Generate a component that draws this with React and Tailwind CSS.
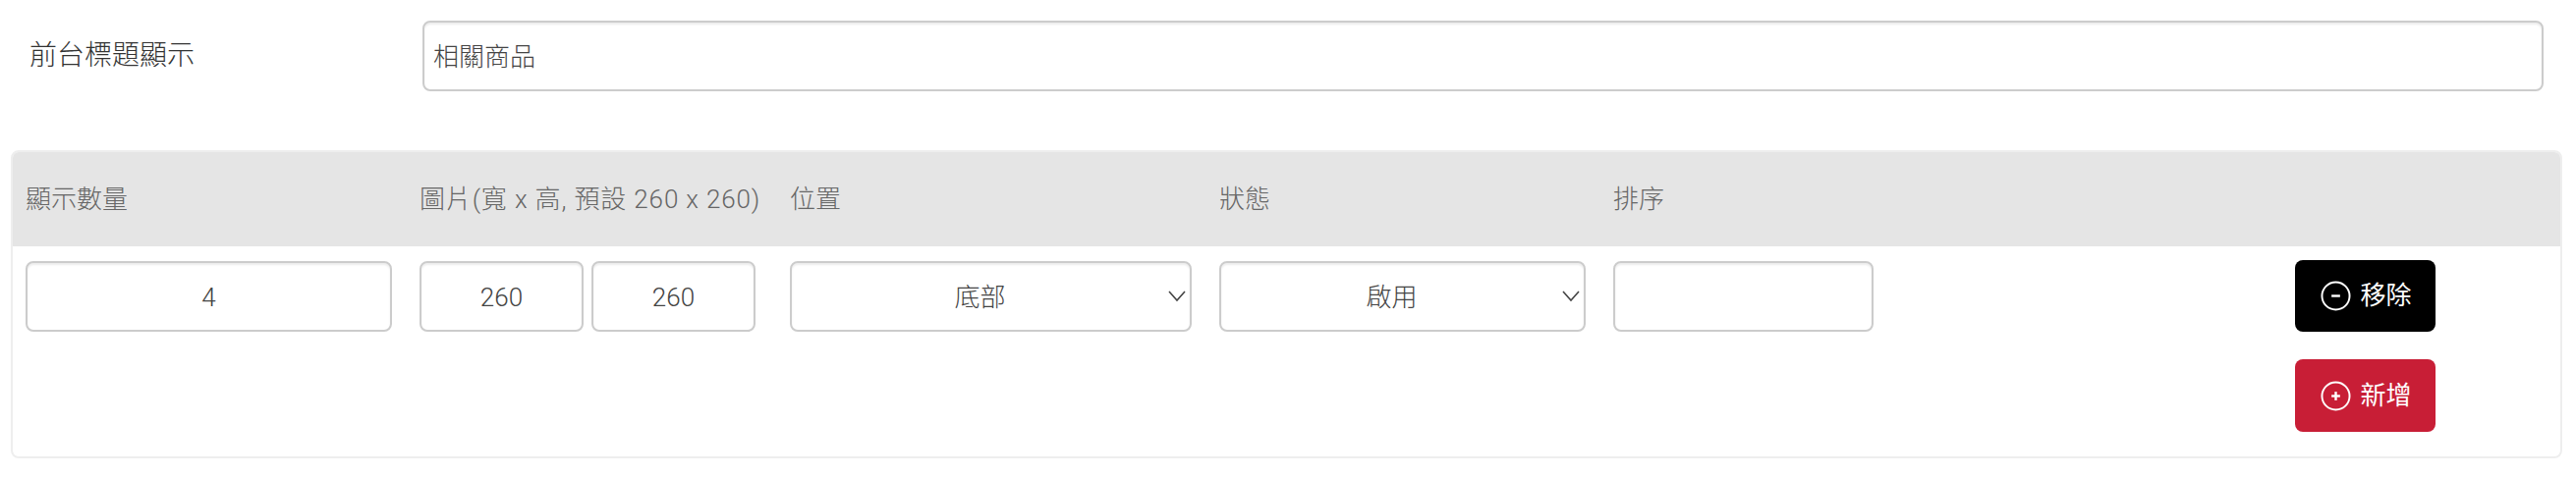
import React from 'react';

const fontStack = "font-['Roboto','Noto_Sans_CJK_TC',sans-serif]";
const fieldClass =
  'h-[72px] w-full rounded-[8px] border-2 border-[#ccc] bg-white pt-[2px] text-center text-[26px] font-light text-[#444] shadow-[inset_0_2px_2px_rgba(0,0,0,0.075)] outline-none';

function Select({ value }) {
  return (
    <div className="relative">
      <select
        defaultValue={value}
        className={`${fieldClass} appearance-none pr-[22px] [text-align-last:center]`}
      >
        <option>{value}</option>
      </select>
      <svg
        className="absolute right-[5px] top-[25px] h-[20px] w-[20px] text-[#444]"
        viewBox="0 0 20 20"
        fill="none"
        stroke="currentColor"
        strokeWidth="1.6"
      >
        <path d="M2 6l8 9 8-9" />
      </svg>
    </div>
  );
}

function CircleIcon({ plus }) {
  return (
    <svg className="ml-[2px] h-[31px] w-[31px]" viewBox="0 0 32 32" fill="none" stroke="currentColor">
      <circle cx="16" cy="16" r="14.5" strokeWidth="2" />
      <path d="M11.5 16h9" strokeWidth="2.5" />
      {plus && <path d="M16 11.5v9" strokeWidth="2.5" />}
    </svg>
  );
}

function ActionButton({ plus, className, children }) {
  return (
    <button className={`flex w-[143px] items-center justify-center gap-[9px] rounded-[8px] text-[26px] font-normal text-white ${className}`}>
      <CircleIcon plus={plus} />
      {children}
    </button>
  );
}

export default function App() {
  const columns = 'grid grid-cols-[401px_377px_437px_401px_694px_143px]';

  return (
    <div className={`h-[486px] w-[2622px] bg-white pl-[11px] pt-[21px] ${fontStack}`}>
      {/* Title row */}
      <div className="flex items-start">
        <label className="w-[419px] pl-[19px] pt-[16px] text-[28px] font-light leading-[40px] text-[#333]">前台標題顯示</label>
        <input
          readOnly
          value="相關商品"
          className="h-[72px] w-[2159px] rounded-[8px] border-2 border-[#ccc] bg-white pb-[3px] pl-[9px] pr-[9px] text-[26px] font-light text-[#444] shadow-[inset_0_2px_2px_rgba(0,0,0,0.075)] outline-none"
        />
      </div>

      {/* Settings table */}
      <div className="mt-[60px] h-[314px] w-[2597px] overflow-hidden rounded-[8px] border-2 border-[#eee]">
        <div className={`${columns} h-[96px] items-center bg-[#e5e5e5] pl-[13px] text-[26px] font-light text-[#666]`}>
          <div>顯示數量</div>
          <div className="whitespace-nowrap tracking-[0.85px]">圖片(寬 x 高, 預設 260 x 260)</div>
          <div>位置</div>
          <div>狀態</div>
          <div>排序</div>
          <div />
        </div>

        <div className={`${columns} pl-[13px] pt-[15px]`}>
          <div className="pr-[28px]">
            <input readOnly value="4" className={fieldClass} />
          </div>
          <div className="flex gap-[8px] pr-[35px]">
            <input readOnly value="260" className={fieldClass} />
            <input readOnly value="260" className={fieldClass} />
          </div>
          <div className="pr-[28px]">
            <Select value="底部" />
          </div>
          <div className="pr-[28px]">
            <Select value="啟用" />
          </div>
          <div className="pr-[429px]">
            <input readOnly className={fieldClass} />
          </div>
          <div className="-mt-px flex flex-col gap-[28px]">
            <ActionButton className="h-[73px] bg-black">移除</ActionButton>
            <ActionButton plus className="h-[74px] bg-[#c81e36]">新增</ActionButton>
          </div>
        </div>
      </div>
    </div>
  );
}
